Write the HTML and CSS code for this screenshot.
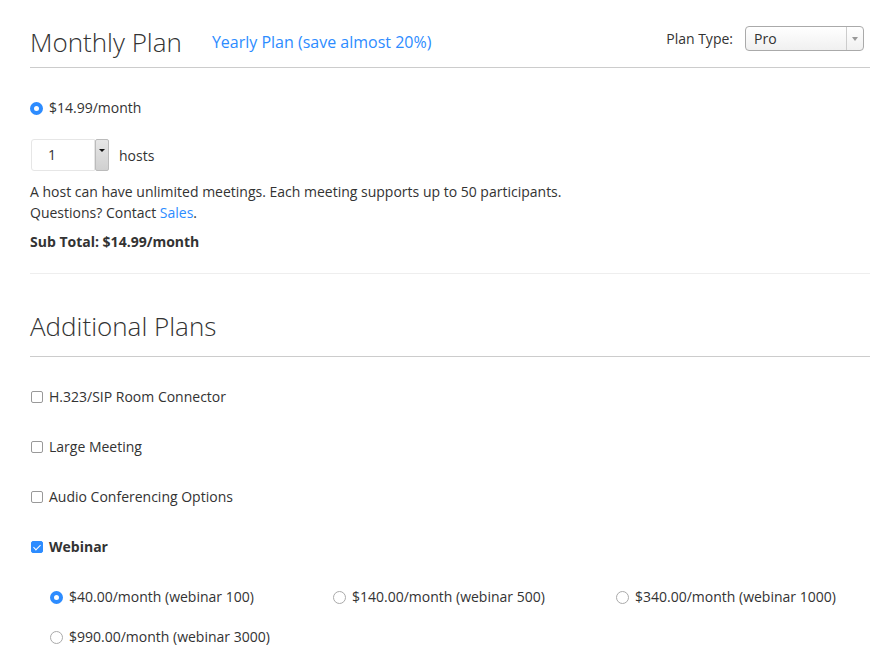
FILE: index.html
```html
<!DOCTYPE html>
<html lang="en">
<head>
    <meta charset="UTF-8">
    <title>Plan</title>
    <link rel="stylesheet" href="styles.css">
</head>
<body>
    <div class="container">
        <div class="plan-header">
            <h1>Monthly Plan</h1>
            <a class="yearly" href="#">Yearly Plan (save almost 20%)</a>
            <div class="plan-type">
                <span>Plan Type:</span>
                <div class="select-box">
                    <span class="select-value">Pro</span>
                    <span class="select-arrow"><i></i></span>
                </div>
            </div>
        </div>

        <div class="monthly">
            <label class="option"><span class="radio checked"></span>$14.99/month</label>

            <div class="hosts-row">
                <div class="hosts-select">
                    <span class="hosts-value">1</span>
                    <span class="hosts-btn"><i></i></span>
                </div>
                <span>hosts</span>
            </div>

            <p class="desc">A host can have unlimited meetings. Each meeting supports up to 50 participants.<br>Questions? Contact <a href="#">Sales</a>.</p>
            <p class="subtotal">Sub Total: $14.99/month</p>
        </div>

        <h2 class="section-title">Additional Plans</h2>

        <div class="addons">
            <label class="option"><span class="check"></span>H.323/SIP Room Connector</label>
            <label class="option"><span class="check"></span>Large Meeting</label>
            <label class="option"><span class="check"></span>Audio Conferencing Options</label>
            <label class="option bold"><span class="check checked"></span>Webinar</label>

            <div class="webinar-grid">
                <label class="option"><span class="radio checked"></span>$40.00/month (webinar 100)</label>
                <label class="option"><span class="radio"></span>$140.00/month (webinar 500)</label>
                <label class="option"><span class="radio"></span>$340.00/month (webinar 1000)</label>
                <label class="option"><span class="radio"></span>$990.00/month (webinar 3000)</label>
            </div>
        </div>
    </div>
</body>
</html>
```

FILE: styles.css
```css
body {
    margin: 0;
    font-family: 'Open Sans', sans-serif;
    font-size: 14px;
    color: #333;
    background: #fff;
}
a {
    color: #2d8cff;
    text-decoration: none;
}
.container {
    width: 840px;
    margin-left: 30px;
}
.plan-header {
    display: flex;
    align-items: center;
    box-sizing: border-box;
    height: 68px;
    padding-top: 16px;
    border-bottom: 1px solid #ccc;
}
h1, .section-title {
    margin: 0;
    font-size: 26px;
    font-weight: 300;
    line-height: 52px;
}
.yearly {
    font-size: 16px;
    margin-left: 30px;
}
.plan-type {
    margin-left: auto;
    margin-right: 6px;
    display: flex;
    align-items: center;
    gap: 12px;
    margin-top: -6px;
}
.select-box {
    display: flex;
    width: 119px;
    height: 25px;
    box-sizing: border-box;
    border: 1px solid #aaa;
    border-radius: 4px;
    background: linear-gradient(#fff, #f0f0f0);
}
.select-value {
    flex: 1;
    padding-left: 8px;
    line-height: 23px;
}
.select-arrow {
    width: 16px;
    border-left: 1px solid #ccc;
    display: flex;
    align-items: center;
    justify-content: center;
}
.select-arrow i {
    border-left: 3px solid transparent;
    border-right: 3px solid transparent;
    border-top: 4px solid #999;
}
.option {
    display: flex;
    align-items: center;
    line-height: 20px;
}
.radio {
    width: 13px;
    height: 13px;
    box-sizing: border-box;
    border: 1px solid #aaa;
    border-radius: 50%;
    background: #fff;
    margin-right: 6px;
}
.radio.checked {
    border: 4px solid #2d8cff;
    background: #fff;
}
.check {
    width: 12px;
    height: 12px;
    box-sizing: border-box;
    border: 1px solid #999;
    border-radius: 2px;
    margin: 0 6px 0 1px;
    position: relative;
}
.check.checked {
    background: #2d8cff;
    border-color: #2d8cff;
}
.check.checked::after {
    content: "";
    position: absolute;
    left: 3px;
    top: 1px;
    width: 3px;
    height: 6px;
    border: solid #fff;
    border-width: 0 1.5px 1.5px 0;
    transform: rotate(45deg);
}
.monthly {
    padding-top: 30px;
    padding-bottom: 21px;
    border-bottom: 1px solid #eee;
}
.hosts-row {
    display: flex;
    align-items: center;
    gap: 10px;
    margin-top: 21px;
}
.hosts-select {
    display: flex;
    height: 32px;
    width: 78px;
    margin-left: 1px;
}
.hosts-value {
    flex: 1;
    border: 1px solid #e6e6e6;
    border-radius: 3px 0 0 3px;
    padding-left: 16px;
    line-height: 30px;
}
.hosts-btn {
    width: 14px;
    background: linear-gradient(#e6e6e6, #d0d0d0);
    border: 1px solid #bbb;
    border-radius: 2px;
    display: flex;
    justify-content: center;
    padding-top: 9px;
    box-sizing: border-box;
}
.hosts-btn i {
    border-left: 3px solid transparent;
    border-right: 3px solid transparent;
    border-top: 3px solid #111;
    height: 0;
}
.desc {
    margin: 10px 0 0;
    line-height: 21px;
}
.subtotal {
    margin: 9px 0 0;
    font-weight: bold;
    line-height: 20px;
}
.section-title {
    padding: 26px 0 4px;
    border-bottom: 1px solid #ccc;
}
.addons {
    padding-top: 30px;
    display: flex;
    flex-direction: column;
    gap: 30px;
}
.bold {
    font-weight: bold;
}
.webinar-grid {
    display: grid;
    grid-template-columns: 283px 283px 254px;
    row-gap: 20px;
    padding-left: 20px;
}
```
